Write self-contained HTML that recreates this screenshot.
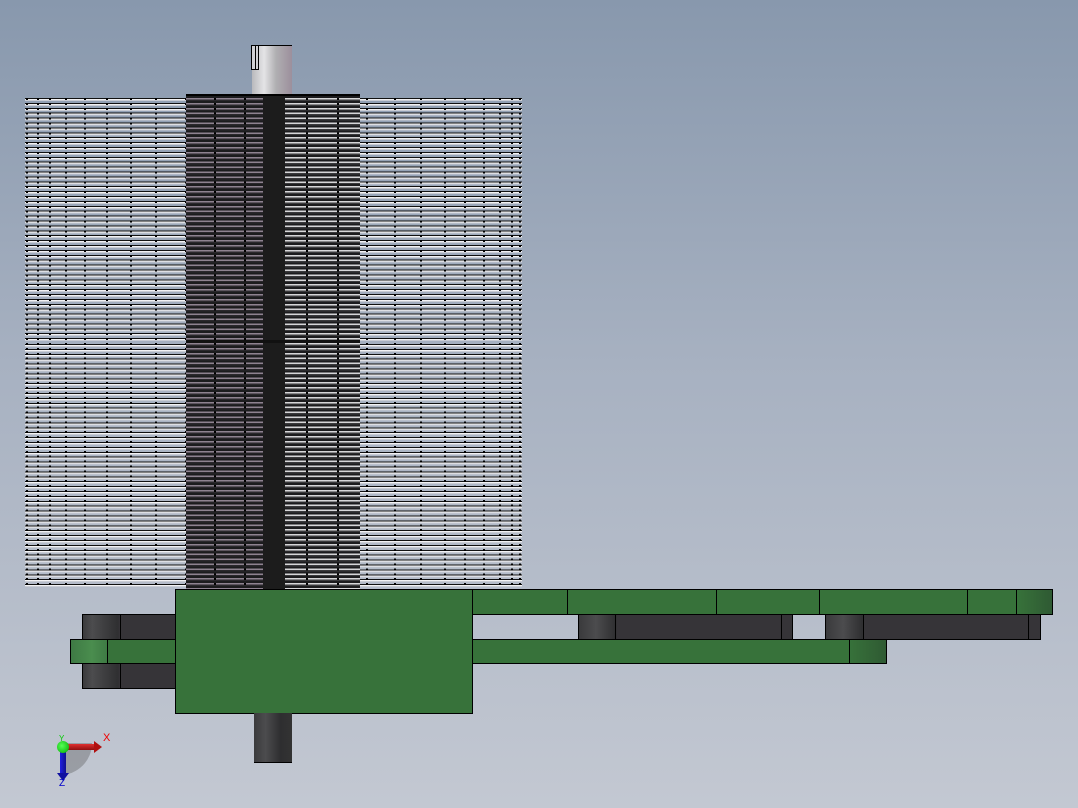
<!DOCTYPE html>
<html><head><meta charset="utf-8"><style>
body{margin:0;width:1078px;height:808px;overflow:hidden;position:relative;
background:linear-gradient(to bottom,#8898ad 0%,#a7b1c1 45%,#c3c8d2 100%);font-family:"Liberation Sans",sans-serif}
div{position:absolute;box-sizing:border-box}
.fin{background:repeating-linear-gradient(to bottom,#111 0 1px,#f2f2f4 1px 2px,#c9ccd4 2px 3px,rgba(0,0,0,0) 3px 4.9px)}
.vd{width:2px;background:repeating-linear-gradient(to bottom,#000 0 2px,rgba(0,0,0,0) 2px 4.9px)}
.g{background:#37723a;border:1px solid #000}
.d{background:#363438;border:1px solid #000}
</style></head><body>
<!-- top shaft -->
<div style="left:252px;top:45px;width:40px;height:50px;border-top:1px solid #000;background:linear-gradient(to right,#b9b9bc,#e4e4e6 30%,#b0afb2 60%,#9c8f9c)"></div>
<div style="left:251px;top:45px;width:8px;height:25px;border:1px solid #000;background:#d0d0d3"></div>
<div style="left:255px;top:46px;width:1px;height:23px;background:#000"></div>
<!-- fins -->
<div class="fin" style="left:25px;top:98px;width:497px;height:243px"></div>
<div class="fin" style="left:25px;top:344px;width:497px;height:243px"></div>
<div class="vd" style="left:26px;top:98px;height:489px"></div>
<div class="vd" style="left:37px;top:98px;height:489px"></div>
<div class="vd" style="left:49px;top:98px;height:489px"></div>
<div class="vd" style="left:65px;top:98px;height:489px"></div>
<div class="vd" style="left:84px;top:98px;height:489px"></div>
<div class="vd" style="left:106px;top:98px;height:489px"></div>
<div class="vd" style="left:130px;top:98px;height:489px"></div>
<div class="vd" style="left:155px;top:98px;height:489px"></div>
<div class="vd" style="left:185px;top:98px;height:489px"></div>
<div class="vd" style="left:366px;top:98px;height:489px"></div>
<div class="vd" style="left:394px;top:98px;height:489px"></div>
<div class="vd" style="left:420px;top:98px;height:489px"></div>
<div class="vd" style="left:444px;top:98px;height:489px"></div>
<div class="vd" style="left:464px;top:98px;height:489px"></div>
<div class="vd" style="left:483px;top:98px;height:489px"></div>
<div class="vd" style="left:499px;top:98px;height:489px"></div>
<div class="vd" style="left:511px;top:98px;height:489px"></div>
<div class="vd" style="left:519px;top:98px;height:489px"></div>
<!-- central dark block -->
<div style="left:186px;top:94px;width:78px;height:495px;border-top:2px solid #000;background:repeating-linear-gradient(to bottom,#1c1c1e 0 2px,#8e8290 2px 3.5px,#2a282c 3.5px 4.9px)"></div>
<div style="left:263px;top:94px;width:23px;height:495px;border-top:2px solid #000;background:#1c1c1c"></div>
<div style="left:285px;top:94px;width:75px;height:495px;border-top:2px solid #000;background:repeating-linear-gradient(to bottom,#1c1c1e 0 2px,#d6d6d8 2px 3.5px,#3a3a3c 3.5px 4.9px)"></div>
<div style="left:186px;top:340px;width:174px;height:3px;background:#111"></div>
<div class="vd" style="left:214px;top:98px;height:489px"></div>
<div class="vd" style="left:244px;top:98px;height:489px"></div>
<div class="vd" style="left:306px;top:98px;height:489px"></div>
<div class="vd" style="left:337px;top:98px;height:489px"></div>
<!-- left pieces -->
<div class="d" style="left:82px;top:614px;width:94px;height:26px;background:linear-gradient(to right,#3a3a3c,#4c4c4e 10%,#2f2f31 38%,#363438 40%)"></div>
<div class="d" style="left:82px;top:663px;width:94px;height:26px;background:linear-gradient(to right,#3a3a3c,#4c4c4e 10%,#2f2f31 38%,#363438 40%)"></div>
<div style="left:120px;top:614px;width:1px;height:75px;background:#000"></div>
<div class="g" style="left:70px;top:639px;width:106px;height:25px;background:linear-gradient(to right,#3e7a44,#4a8d4e 20%,#3e7a44 35%,#37723a 36%)"></div>
<div style="left:107px;top:639px;width:1px;height:25px;background:#000"></div>
<!-- right bars -->
<div class="g" style="left:471px;top:589px;width:582px;height:26px;background:linear-gradient(to right,#37723a 94%,#2f5a33 100%)"></div>
<div style="left:567px;top:589px;width:1px;height:25px;background:#000"></div>
<div style="left:716px;top:589px;width:1px;height:25px;background:#000"></div>
<div style="left:819px;top:589px;width:1px;height:25px;background:#000"></div>
<div style="left:967px;top:589px;width:1px;height:25px;background:#000"></div>
<div style="left:1016px;top:589px;width:1px;height:25px;background:#000"></div>
<div class="d" style="left:578px;top:614px;width:215px;height:26px;background:linear-gradient(to right,#3a3a3c,#4c4c4e 8%,#2f2f31 17%,#363438 18%)"></div>
<div style="left:615px;top:614px;width:1px;height:25px;background:#000"></div>
<div style="left:781px;top:614px;width:1px;height:25px;background:#000"></div>
<div class="d" style="left:825px;top:614px;width:216px;height:26px;background:linear-gradient(to right,#3a3a3c,#4c4c4e 8%,#2f2f31 17%,#363438 18%)"></div>
<div style="left:863px;top:614px;width:1px;height:25px;background:#000"></div>
<div style="left:1028px;top:614px;width:1px;height:25px;background:#000"></div>
<div class="g" style="left:471px;top:639px;width:416px;height:25px;background:linear-gradient(to right,#37723a 91%,#2f5a33 100%)"></div>
<div style="left:849px;top:639px;width:1px;height:25px;background:#000"></div>
<!-- main green box -->
<div class="g" style="left:175px;top:589px;width:298px;height:125px"></div>
<!-- bottom shaft -->
<div style="left:254px;top:713px;width:38px;height:50px;border-bottom:1px solid #000;background:linear-gradient(to right,#3a3a3c,#4c4c4e 30%,#2e2e30 70%,#333)"></div>
<!-- triad -->
<div style="left:60px;top:743px;width:32px;height:32px;border-radius:0 0 32px 0;background:rgba(80,80,80,.35)"></div>
<div style="left:62px;top:744px;width:34px;height:6px;background:linear-gradient(#e03030,#901010)"></div>
<div style="left:94px;top:741px;width:0;height:0;border-left:8px solid #b01010;border-top:6px solid transparent;border-bottom:6px solid transparent"></div>
<div style="left:60px;top:746px;width:6px;height:28px;background:linear-gradient(to right,#2020e0,#101090)"></div>
<div style="left:57px;top:773px;width:0;height:0;border-top:8px solid #1010a0;border-left:6px solid transparent;border-right:6px solid transparent"></div>
<div style="left:57px;top:741px;width:12px;height:12px;border-radius:50%;background:radial-gradient(circle at 40% 40%,#5f5,#0a0)"></div>
<div style="left:103px;top:732px;font-size:11px;color:#e00">X</div>
<div style="left:59px;top:734px;font-size:8px;color:#0c0">Y</div>
<div style="left:59px;top:778px;font-size:10px;color:#00c">Z</div>
</body></html>
